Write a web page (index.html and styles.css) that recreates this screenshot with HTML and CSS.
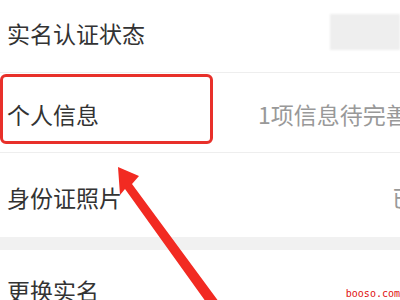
FILE: index.html
```html
<!DOCTYPE html>
<html lang="zh">
<head>
<meta charset="utf-8">
<title>实名认证</title>
<link rel="stylesheet" href="styles.css">
</head>
<body>
<div class="page">
  <div class="row r1">
    <span class="label">实名认证状态</span>
    <span class="blurval"></span>
  </div>
  <div class="row r2">
    <span class="label l2">个人信息</span>
    <span class="value">1项信息待完善</span>
  </div>
  <div class="row r3">
    <span class="label l3">身份证照片</span>
    <span class="value">已上传</span>
  </div>
  <div class="band"></div>
  <div class="row r4">
    <span class="label">更换实名</span>
  </div>
  <div class="highlight"></div>
  <svg class="arrow" width="400" height="300" viewBox="0 0 400 300">
    <polygon points="118,167 139,176 132,184 219,302 206,302 125,189 120,195" fill="#f22a22"/>
  </svg>
  <div class="watermark">booso.com</div>
</div>
</body>
</html>
```
FILE: styles.css
```css
html, body {
  margin: 0;
  padding: 0;
  background: #ffffff;
}
.page {
  position: relative;
  width: 400px;
  height: 300px;
  overflow: hidden;
  font-family: "Noto Sans CJK SC", "Noto Sans", sans-serif;
  font-size: 23px;
  color: #333333;
}
.row {
  display: flex;
  align-items: center;
  padding-left: 7px;
  box-sizing: border-box;
  border-bottom: 1px solid #eeeeee;
  white-space: nowrap;
}
.r1 { height: 73px; padding-bottom: 7px; }
.r2 { height: 80px; padding-top: 2px; }
.r3 { height: 84px; padding-top: 4px; border-bottom: none; }
.r4 { height: 80px; border-bottom: none; }
.label { flex: 0 0 auto; }
.l2 { flex-basis: 251px; }
.l3 { flex-basis: 385px; }
.value {
  color: #999999;
  flex: 0 0 auto;
}
.blurval {
  margin-left: auto;
  align-self: flex-start;
  margin-top: 14px;
  width: 70px;
  height: 36px;
  background: #eeeeee;
  filter: blur(1px);
}
.band {
  height: 13px;
  background: #f1f1f1;
}
.highlight {
  position: absolute;
  left: 0;
  top: 74px;
  width: 213px;
  height: 70px;
  box-sizing: border-box;
  border: 3px solid #e8302a;
  border-radius: 6px;
}
.arrow {
  position: absolute;
  left: 0;
  top: 0;
}
.watermark {
  position: absolute;
  right: 0;
  bottom: 1px;
  font-family: "DejaVu Sans Mono", monospace;
  font-size: 10px;
  color: #e01010;
}
```
